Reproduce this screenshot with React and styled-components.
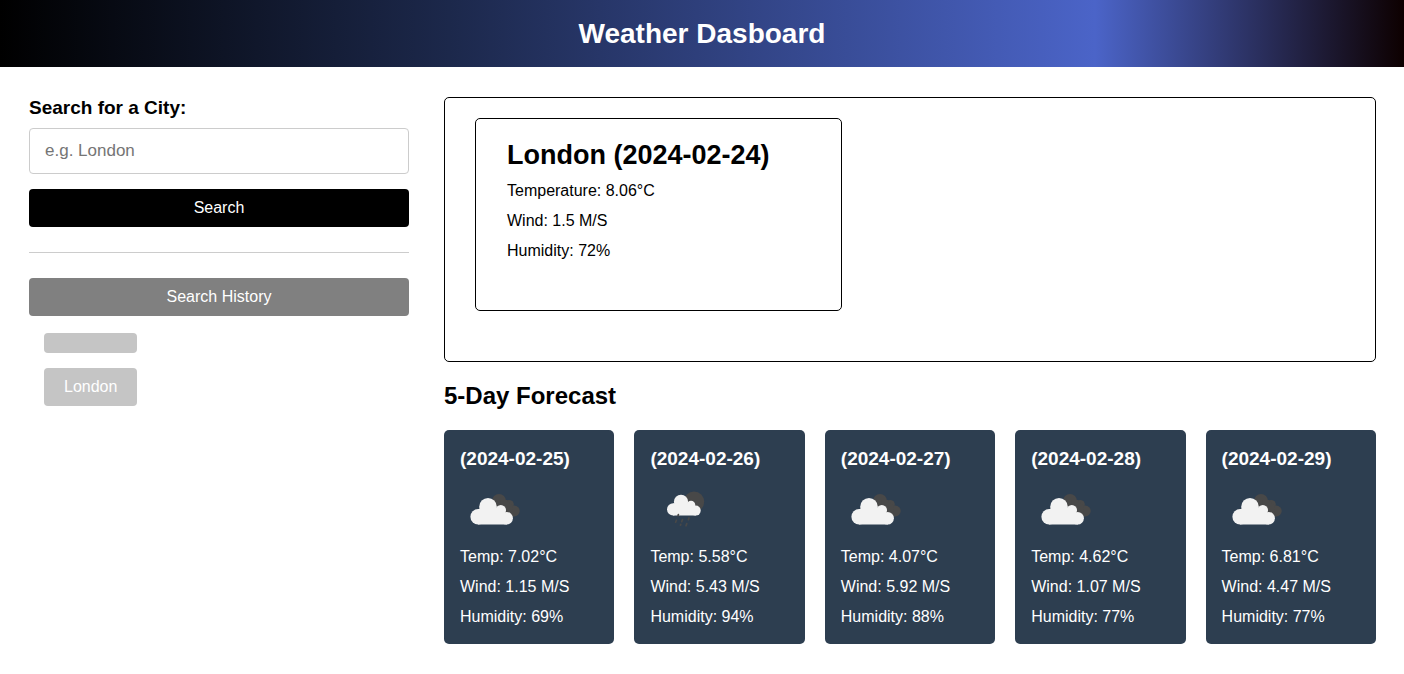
import React from "react";
import styled, { createGlobalStyle } from "styled-components";

const GlobalStyle = createGlobalStyle`
  * { box-sizing: border-box; margin: 0; }
  body {
    background: #fff;
    color: #000;
    font-family: "Liberation Sans", Helvetica, Arial, sans-serif;
    font-size: 16px;
  }
`;

const Header = styled.header`
  padding: 16px;
  text-align: center;
  color: #fff;
  background: linear-gradient(90deg, #000 0%, #1c284b 32%, #4b64c8 78%, #0d0000 100%);
`;

const PageTitle = styled.h1`
  font-size: 28px;
  line-height: 35px;
`;

const Layout = styled.div`
  display: flex;
  align-items: flex-start;
  gap: 35px;
  padding: 30px 28px 30px 29px;
`;

const Sidebar = styled.aside`
  flex: 0 0 380px;
`;

const SearchForm = styled.form`
  display: flex;
  flex-direction: column;
  padding-bottom: 25px;
  border-bottom: 1px solid #ccc;
`;

const Label = styled.label`
  font-size: 19px;
  font-weight: bold;
  line-height: 21px;
  margin-bottom: 10px;
`;

const CityInput = styled.input`
  height: 46px;
  padding: 0 15px;
  margin-bottom: 15px;
  border: 1px solid #ccc;
  border-radius: 4px;
  font: inherit;
  font-size: 17px;
  &::placeholder { color: #757575; }
`;

const Button = styled.button`
  display: block;
  width: 100%;
  padding: 10px 20px;
  border: none;
  border-radius: 4px;
  background: ${(p) => p.$color};
  color: #fff;
  font: inherit;
  line-height: 18px;
  cursor: pointer;
`;

const History = styled.section`
  padding-top: 25px;
`;

const HistoryList = styled.div`
  display: inline-flex;
  flex-direction: column;
  gap: 15px;
  padding: 17px 15px;
`;

const Content = styled.main`
  flex: 1;
  min-width: 0;
`;

const Today = styled.section`
  padding: 20px 30px 50px;
  border: 1px solid #000;
  border-radius: 5px;
`;

const TodayCard = styled.article`
  max-width: 367px;
  padding: 20px 31px 44px;
  border: 1px solid #000;
  border-radius: 5px;
`;

const CityName = styled.h2`
  font-size: 27px;
  line-height: 32px;
  margin-bottom: 5px;
`;

const Reading = styled.p`
  line-height: 30px;
`;

const ForecastTitle = styled.h2`
  font-size: 24px;
  line-height: 28px;
  margin: 20px 0;
`;

const ForecastGrid = styled.div`
  display: grid;
  grid-template-columns: repeat(5, 1fr);
  gap: 20px;
`;

const ForecastCard = styled.article`
  padding: 16px 16px 12px;
  border-radius: 5px;
  background: #2d3e50;
  color: #fff;
`;

const ForecastDate = styled.h3`
  font-size: 19px;
  line-height: 26px;
`;

const WeatherIcon = styled.svg`
  display: block;
  width: 70px;
  height: 60px;
  margin: 8px 0 2px;
`;

function CloudsIcon() {
  return (
    <WeatherIcon viewBox="0 0 70 60" role="img" aria-label="Broken clouds">
      <g fill="#484848">
        <circle cx="39" cy="21" r="7" />
        <circle cx="49.2" cy="24.6" r="4.6" />
        <circle cx="54.3" cy="31" r="5.4" />
        <path d="M40 20h7l5 6 2 10.4H42z" />
      </g>
      <g fill="#f2f2f2">
        <circle cx="18.2" cy="36.7" r="7.8" />
        <circle cx="28" cy="26.8" r="8.8" />
        <circle cx="40.8" cy="30.2" r="5.2" />
        <circle cx="46.6" cy="38.2" r="6.3" />
        <path d="M18 29h19l8 3 2 12.5H18z" />
      </g>
    </WeatherIcon>
  );
}

function RainIcon() {
  return (
    <WeatherIcon viewBox="0 0 70 60" role="img" aria-label="Rain">
      <circle cx="44" cy="21.8" r="10.2" fill="#484848" />
      <g fill="#f2f2f2">
        <circle cx="23.2" cy="29.4" r="6.2" />
        <circle cx="31" cy="21.8" r="7.1" />
        <circle cx="41" cy="25" r="4.3" />
        <circle cx="45.7" cy="30.6" r="5" />
        <path d="M23 23.5h15l6 2.5 2 9.6H23z" />
      </g>
      <g stroke="#484848" strokeWidth="1.7" strokeLinecap="round">
        <path d="M28.4 34.6l-.3 1M26.4 40.2l-.8 2M32.5 39.6l-.8 2M39 38l-.6 1.6M30.8 44.4l-.3.7M36.8 43.6l-.8 2.2" />
      </g>
    </WeatherIcon>
  );
}

const forecast = [
  { date: "2024-02-25", Icon: CloudsIcon, temp: "7.02", wind: "1.15", humidity: 69 },
  { date: "2024-02-26", Icon: RainIcon, temp: "5.58", wind: "5.43", humidity: 94 },
  { date: "2024-02-27", Icon: CloudsIcon, temp: "4.07", wind: "5.92", humidity: 88 },
  { date: "2024-02-28", Icon: CloudsIcon, temp: "4.62", wind: "1.07", humidity: 77 },
  { date: "2024-02-29", Icon: CloudsIcon, temp: "6.81", wind: "4.47", humidity: 77 },
];

export default function App() {
  return (
    <>
      <GlobalStyle />
      <Header>
        <PageTitle>Weather Dasboard</PageTitle>
      </Header>
      <Layout>
        <Sidebar>
          <SearchForm onSubmit={(e) => e.preventDefault()}>
            <Label htmlFor="city">Search for a City:</Label>
            <CityInput id="city" type="text" placeholder="e.g. London" />
            <Button type="submit" $color="#000">Search</Button>
          </SearchForm>
          <History>
            <Button type="button" $color="#808080">Search History</Button>
            <HistoryList>
              <Button type="button" $color="#c5c5c5" />
              <Button type="button" $color="#c5c5c5">London</Button>
            </HistoryList>
          </History>
        </Sidebar>
        <Content>
          <Today>
            <TodayCard>
              <CityName>London (2024-02-24)</CityName>
              <Reading>Temperature: 8.06°C</Reading>
              <Reading>Wind: 1.5 M/S</Reading>
              <Reading>Humidity: 72%</Reading>
            </TodayCard>
          </Today>
          <ForecastTitle>5-Day Forecast</ForecastTitle>
          <ForecastGrid>
            {forecast.map(({ date, Icon, temp, wind, humidity }) => (
              <ForecastCard key={date}>
                <ForecastDate>({date})</ForecastDate>
                <Icon />
                <Reading>Temp: {temp}°C</Reading>
                <Reading>Wind: {wind} M/S</Reading>
                <Reading>Humidity: {humidity}%</Reading>
              </ForecastCard>
            ))}
          </ForecastGrid>
        </Content>
      </Layout>
    </>
  );
}
